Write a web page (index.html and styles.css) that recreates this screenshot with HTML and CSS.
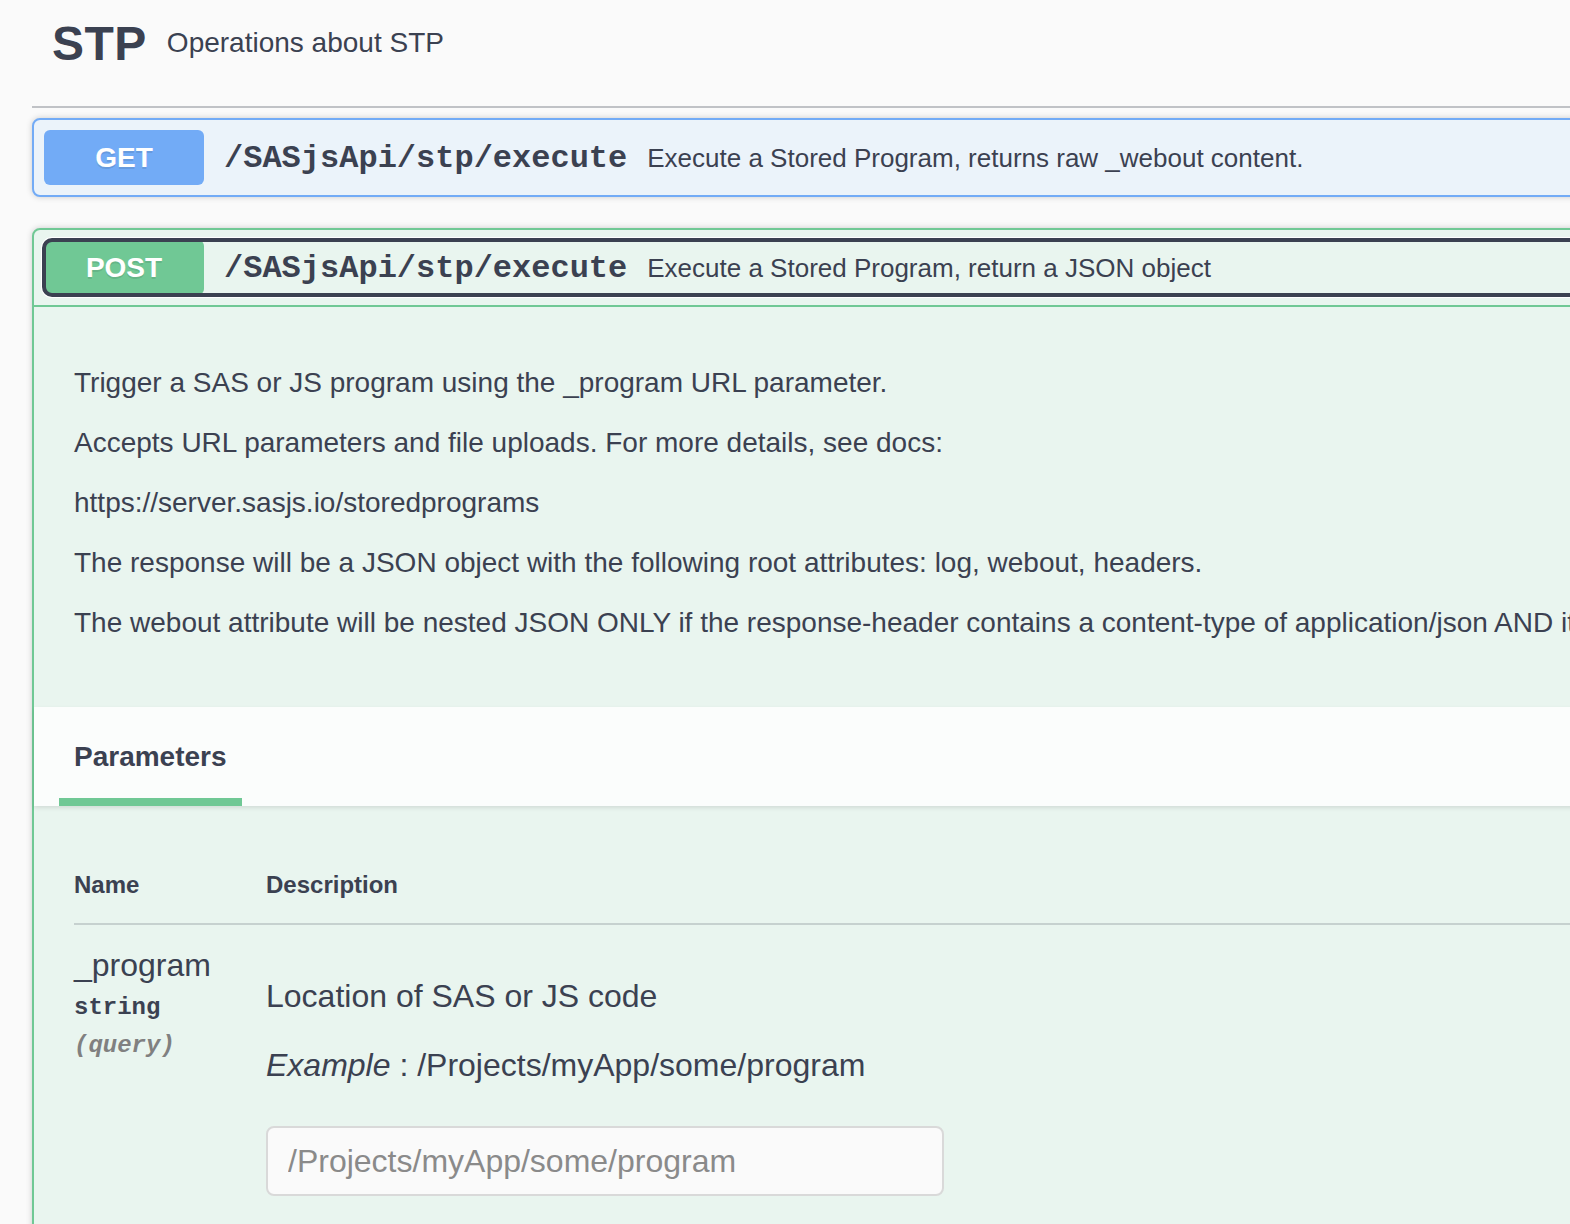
FILE: index.html
```html
<!DOCTYPE html>
<html lang="en">
<head>
<meta charset="utf-8">
<title>STP</title>
<link rel="stylesheet" href="styles.css">
</head>
<body>
<div class="wrapper">
  <h3 class="tag">
    <span class="tag-name">STP</span>
    <small class="tag-desc">Operations about STP</small>
  </h3>

  <div class="opblock opblock-get">
    <div class="summary">
      <div class="control">
        <span class="method">GET</span>
        <span class="path">/SASjsApi/stp/execute</span>
        <span class="summary-desc">Execute a Stored Program, returns raw _webout content.</span>
      </div>
    </div>
  </div>

  <div class="opblock opblock-post">
    <div class="summary summary-open">
      <div class="control control-focus">
        <span class="method">POST</span>
        <span class="path">/SASjsApi/stp/execute</span>
        <span class="summary-desc">Execute a Stored Program, return a JSON object</span>
      </div>
    </div>

    <div class="description">
      <p>Trigger a SAS or JS program using the _program URL parameter.</p>
      <p>Accepts URL parameters and file uploads. For more details, see docs:</p>
      <p>https://server.sasjs.io/storedprograms</p>
      <p>The response will be a JSON object with the following root attributes: log, webout, headers.</p>
      <p>The webout attribute will be nested JSON ONLY if the response-header contains a content-type of application/json AND it is valid JSON. Otherwise it will be a stringified version of the webout content.</p>
    </div>

    <div class="section-header">
      <h4 class="tab-title">Parameters</h4>
    </div>

    <div class="params">
      <div class="params-head">
        <div class="col-name">Name</div>
        <div class="col-desc">Description</div>
      </div>
      <div class="param-row">
        <div class="col-name">
          <div class="param-name">_program</div>
          <div class="param-type">string</div>
          <div class="param-in">(query)</div>
        </div>
        <div class="col-desc">
          <p class="param-text">Location of SAS or JS code</p>
          <p class="param-example"><i>Example</i> : /Projects/myApp/some/program</p>
          <input class="param-input" type="text" placeholder="/Projects/myApp/some/program">
        </div>
      </div>
    </div>
  </div>
</div>
</body>
</html>
```

FILE: styles.css
```css
html, body {
  margin: 0;
  padding: 0;
  overflow: hidden;
  background: #fafafa;
  color: #3b4151;
  font-family: "Liberation Sans", Arial, Helvetica, sans-serif;
}

.wrapper {
  width: 2600px;
  padding: 0 0 0 32px;
}

.tag {
  display: flex;
  align-items: center;
  box-sizing: border-box;
  height: 108px;
  margin: 0;
  padding: 3px 40px 23px 20px;
  border-bottom: 2px solid rgba(59, 65, 81, 0.3);
}

.tag-name {
  font-size: 48px;
  font-weight: bold;
  letter-spacing: 0.5px;
}

.tag-desc {
  font-size: 28px;
  font-weight: normal;
  padding: 0 0 0 20px;
}

.opblock {
  border-radius: 8px;
  border: 2px solid;
  box-shadow: 0 0 6px rgba(0, 0, 0, 0.19);
  margin: 10px 0 31px;
}

.opblock-get {
  border-color: #72abf6;
  background: #ebf3fa;
}

.opblock-post {
  border-color: #70c895;
  background: #e9f5ef;
  margin-top: 0;
}

.summary {
  padding: 10px;
}

.summary-open {
  border-bottom: 2px solid #70c895;
}

.control {
  display: flex;
  align-items: center;
  height: 55px;
  border-radius: 8px;
}

.control-focus {
  outline: 4px solid #3b4151;
  outline-offset: -2px;
  box-shadow: 0 0 0 3px #ffffff;
}

.method {
  display: flex;
  align-items: center;
  justify-content: center;
  width: 160px;
  height: 55px;
  flex: none;
  border-radius: 6px;
  color: #fff;
  font-size: 28px;
  font-weight: bold;
  text-shadow: 0 2px 0 rgba(0, 0, 0, 0.1);
}

.opblock-get .method { background: #72abf6; }
.opblock-post .method { background: #70c895; }

.path {
  padding: 2px 20px 0;
  font-family: "Liberation Mono", "Courier New", monospace;
  font-size: 32px;
  font-weight: bold;
  white-space: nowrap;
}

.summary-desc {
  font-size: 26px;
  padding-top: 2px;
  white-space: nowrap;
}

.description {
  padding: 36px 40px 44px;
}

.description p {
  margin: 20px 0;
  font-size: 28px;
  line-height: 40px;
  white-space: nowrap;
}

.section-header {
  display: flex;
  align-items: center;
  box-sizing: border-box;
  height: 99px;
  padding: 0 40px;
  background: rgba(255, 255, 255, 0.8);
  box-shadow: 0 2px 4px rgba(0, 0, 0, 0.1);
}

.tab-title {
  position: relative;
  margin: 0;
  font-size: 28px;
  font-weight: bold;
}

.tab-title::after {
  content: "";
  position: absolute;
  left: -10%;
  width: 120%;
  bottom: -33px;
  height: 8px;
  background: #70c895;
}

.params {
  padding: 64px 40px 40px;
}

.params-head {
  display: flex;
  font-size: 24px;
  font-weight: bold;
  line-height: 30px;
  padding-bottom: 23px;
  border-bottom: 2px solid rgba(59, 65, 81, 0.2);
}

.col-name {
  width: 192px;
  flex: none;
}

.col-desc {
  flex: 1;
}

.param-row {
  display: flex;
  padding-top: 20px;
}

.param-name {
  font-size: 32px;
  line-height: 40px;
}

.param-type {
  font-family: "Liberation Mono", "Courier New", monospace;
  font-size: 24px;
  font-weight: bold;
  line-height: 30px;
  padding: 8px 0 0;
}

.param-in {
  font-family: "Liberation Mono", "Courier New", monospace;
  font-size: 24px;
  font-weight: bold;
  font-style: italic;
  color: #808080;
  line-height: 30px;
  padding-top: 8px;
}

.param-text {
  margin: 28px 0 0;
  font-size: 32px;
  line-height: 46px;
}

.param-example {
  margin: 23px 0 0;
  font-size: 32px;
  line-height: 46px;
}

.param-input {
  display: block;
  box-sizing: border-box;
  width: 678px;
  height: 70px;
  margin-top: 38px;
  padding: 0 20px;
  border: 2px solid #d9d9d9;
  border-radius: 8px;
  background: #fafafa;
  color: #3b4151;
  font-family: "Liberation Sans", Arial, Helvetica, sans-serif;
  font-size: 32px;
}

.param-input::placeholder {
  color: #8a8a8a;
}
```
